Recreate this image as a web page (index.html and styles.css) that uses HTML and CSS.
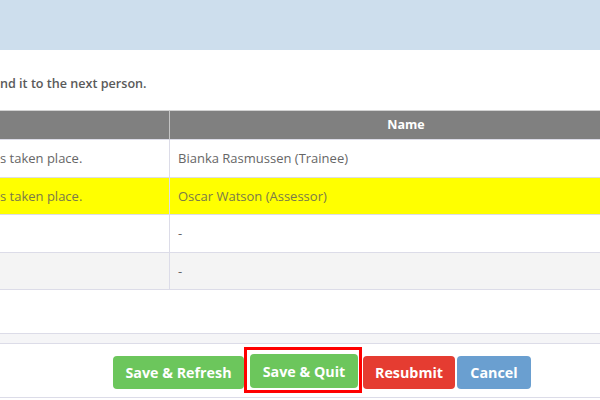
FILE: index.html
```html
<!DOCTYPE html>
<html lang="en">
<head>
<meta charset="utf-8">
<title>Sign-off</title>
<link rel="stylesheet" href="styles.css">
</head>
<body>
<div class="banner"></div>
<p class="intro">nd it to the next person.</p>
<table class="grid">
  <thead>
    <tr><th class="c1"></th><th class="c2">Name</th></tr>
  </thead>
  <tbody>
    <tr><td class="c1">s taken place.</td><td class="c2">Bianka Rasmussen (Trainee)</td></tr>
    <tr class="hl"><td class="c1">s taken place.</td><td class="c2">Oscar Watson (Assessor)</td></tr>
    <tr><td class="c1"></td><td class="c2 dash">-</td></tr>
    <tr class="alt"><td class="c1"></td><td class="c2 dash">-</td></tr>
  </tbody>
</table>
<div class="band"></div>
<div class="footer">
  <button class="btn green w-refresh">Save &amp; Refresh</button>
  <span class="focus"><button class="btn green w-quit">Save &amp; Quit</button></span>
  <button class="btn red w-resubmit">Resubmit</button>
  <button class="btn blue w-cancel">Cancel</button>
</div>
</body>
</html>
```
FILE: styles.css
```css
html, body {
  margin: 0;
  padding: 0;
  background: #ffffff;
  overflow: hidden;
  font-family: "Open Sans", "Noto Sans", sans-serif;
}
.banner {
  height: 50px;
  background: #cddeed;
}
.intro {
  margin: 0;
  padding: 25px 0 17px 0;
  font-size: 12.6px;
  line-height: 18px;
  font-weight: 600;
  color: #5a5a5a;
}
.grid {
  width: 642px;
  border-collapse: separate;
  border-spacing: 0;
  margin-bottom: 43px;
}
.grid th {
  background: #808080;
  color: #ffffff;
  font-size: 12.5px;
  font-weight: 700;
  line-height: 18px;
  padding: 5px 8px;
  border-top: 1px solid #d2d2d2;
  border-bottom: 1px solid #dcdce8;
  text-align: center;
}
.grid th.c1 {
  border-right: 1px solid #c4c4c4;
  padding-left: 0;
}
.grid td {
  font-size: 13px;
  line-height: 18.5px;
  padding: 9px 8px;
  color: #666666;
  border-bottom: 1px solid #dcdce8;
  text-align: left;
}
.grid td.c1 {
  border-right: 1px solid #dcdce8;
  padding-left: 0;
}
.c1 {
  width: 161px;
}
.grid tr.hl td {
  background: #ffff00;
  color: #7a7a4a;
}
.grid tr.alt td {
  background: #f4f4f4;
}
.band {
  height: 9px;
  background: #f5f5f7;
  border-top: 1px solid #dcdce8;
  border-bottom: 1px solid #dcdce8;
}
.footer {
  display: flex;
  justify-content: flex-end;
  align-items: flex-start;
  padding: 3px 69px 4px 0;
  border-bottom: 1px solid #dcdce8;
}
.btn {
  font-family: "Open Sans", "Noto Sans", sans-serif;
  font-size: 14.3px;
  font-weight: 700;
  line-height: 19px;
  color: #ffffff;
  border: none;
  border-radius: 4px;
  padding: 7px 0;
  margin-top: 9px;
  text-align: center;
  cursor: pointer;
}
.w-refresh { width: 131px; }
.w-quit { width: 108px; }
.w-resubmit { width: 92px; }
.w-cancel { width: 74px; }
.green { background: #6cc65c; }
.red { background: #e53c31; margin-left: 1px; }
.blue { background: #6a9fd0; margin-left: 2px; }
.focus {
  display: inline-flex;
  border: 3px solid #ff0000;
  padding: 4px 1px 2px 3px;
}
.focus .btn {
  margin-top: 0;
  height: 34px;
}
```
